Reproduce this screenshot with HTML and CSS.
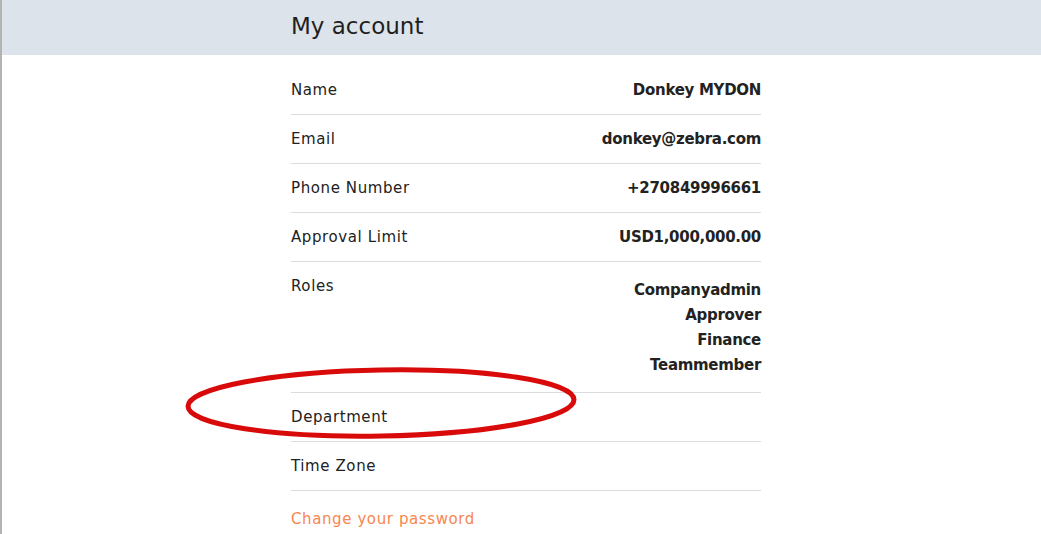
FILE: index.html
```html
<!DOCTYPE html>
<html lang="en">
<head>
	<meta charset="UTF-8" />
	<title>My account</title>
	<link rel="stylesheet" href="styles.css">
</head>
<body>
	<div class="page">
		<!-- header -->
		<div class="header">
			<div class="inner">
				<h1>My account</h1>
			</div>
		</div>
		<!-- END of header -->
		<div class="inner">
			<ul class="details">
				<li class="row">
					<span class="label">Name</span>
					<span class="value">Donkey MYDON</span>
				</li>
				<li class="row">
					<span class="label">Email</span>
					<span class="value">donkey@zebra.com</span>
				</li>
				<li class="row">
					<span class="label">Phone Number</span>
					<span class="value">+270849996661</span>
				</li>
				<li class="row">
					<span class="label">Approval Limit</span>
					<span class="value">USD1,000,000.00</span>
				</li>
				<li class="row">
					<span class="label">Roles</span>
					<span class="value roles">
						<span>Companyadmin</span>
						<span>Approver</span>
						<span>Finance</span>
						<span>Teammember</span>
					</span>
				</li>
				<li class="row dept">
					<span class="label">Department</span>
					<span class="value"></span>
					<svg class="circle" width="400" height="80" viewBox="0 0 400 80">
						<ellipse cx="198" cy="40" rx="193" ry="33" transform="rotate(-1 198 40)" fill="none" stroke="#d90a0a" stroke-width="5" />
					</svg>
				</li>
				<li class="row">
					<span class="label">Time Zone</span>
					<span class="value"></span>
				</li>
			</ul>
			<a class="change-pwd" href="#">Change your password</a>
		</div>
	</div>
</body>
</html>
```

FILE: styles.css
```css
html,
body,
div,
ul,
li,
h1 {
	margin: 0;
	padding: 0;
	box-sizing: border-box;
}

body {
	width: 1041px;
	height: 534px;
	overflow: hidden;
	background-color: #fff;
	font-family: "DejaVu Sans", "Open Sans", sans-serif;
	color: #222;
}

.page {
	height: 100%;
	border-left: 2px solid #b3b3b3;
}

.header {
	height: 55px;
	background-color: #dde3eb;
}

.inner {
	width: 470px;
	margin-left: 289px;
}

h1 {
	font-size: 23px;
	font-weight: normal;
	line-height: 52px;
	color: #1f1f1f;
}

.details {
	list-style: none;
	padding-top: 11px;
}

.row {
	position: relative;
	display: flex;
	justify-content: space-between;
	align-items: flex-start;
	padding: 14px 0;
	border-bottom: 1px solid #dcdcdc;
	font-size: 15px;
	line-height: 20px;
}

.label {
	letter-spacing: 0.6px;
}

.value {
	font-weight: bold;
	text-align: right;
	letter-spacing: -0.3px;
}

.roles {
	display: flex;
	flex-direction: column;
	align-items: flex-end;
	line-height: 25px;
	margin-top: 2px;
}

.circle {
	position: absolute;
	left: -108px;
	top: -30px;
	pointer-events: none;
}

.change-pwd {
	display: block;
	margin-top: 18px;
	font-size: 15px;
	line-height: 20px;
	letter-spacing: 0.6px;
	color: #f7874f;
	text-decoration: none;
}
```
